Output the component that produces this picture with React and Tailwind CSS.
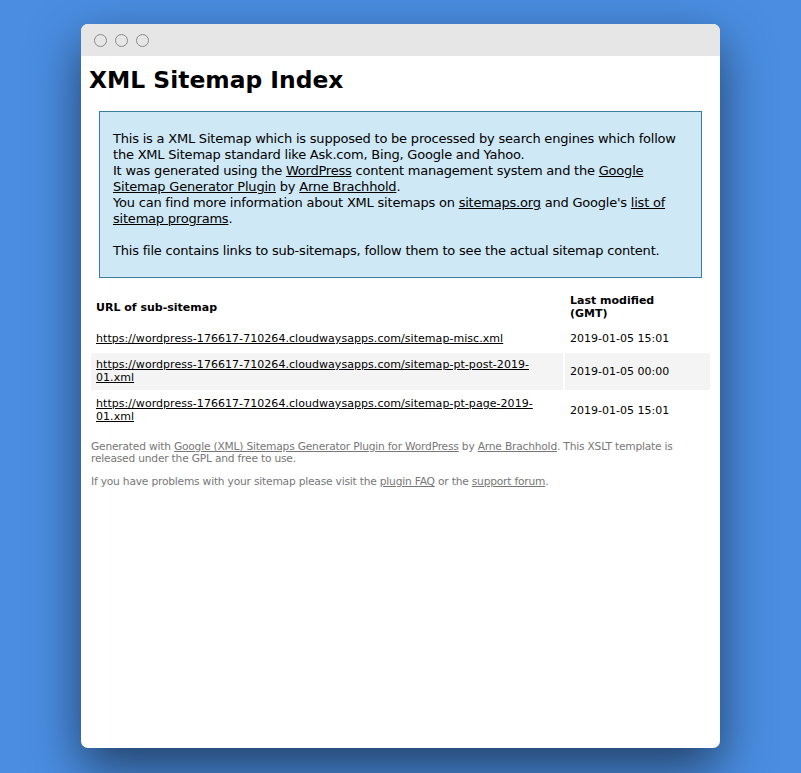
import React from "react";

const F = { fontFamily: '"DejaVu Sans", "Liberation Sans", sans-serif' };

function Row({ url, date, gray }) {
  return (
    <tr className={gray ? "bg-[#f4f4f4]" : ""}>
      <td className="px-[5px] pt-[5px] pb-[6px] leading-[13px] align-middle tracking-[0.05px]">
        <a className="underline text-black">{url}</a>
      </td>
      <td className="px-[5px] pt-[5px] pb-[6px] leading-[13px] align-middle whitespace-nowrap">
        {date}
      </td>
    </tr>
  );
}

export default function App() {
  return (
    <div className="w-[801px] h-[773px] bg-[#4a8de1] pt-[24px] pl-[81px] overflow-hidden" style={F}>
      <div className="w-[639px] h-[724px] rounded-[7px] bg-white overflow-hidden shadow-[0_20px_50px_rgba(0,0,0,0.55)] flex flex-col">
        <div className="h-[32px] bg-[#e6e6e6] flex items-center pl-[13px] gap-[8px] shrink-0">
          <span className="w-[13px] h-[13px] rounded-full border border-[#8a8a8a]" />
          <span className="w-[13px] h-[13px] rounded-full border border-[#8a8a8a]" />
          <span className="w-[13px] h-[13px] rounded-full border border-[#8a8a8a]" />
        </div>
        <div className="px-[8px] text-black">
          <h1 className="mt-[10px] text-[23.4px] leading-[28px] font-bold">XML Sitemap Index</h1>
          <div className="mt-[17px] mx-[10px] border border-[#3b7d9e] bg-[#cfe8f6] pl-[13px] pt-[19px] pb-[18px] text-[13px] leading-[16px] whitespace-nowrap tracking-[-0.21px]">
            <div>This is a XML Sitemap which is supposed to be processed by search engines which follow</div>
            <div>the XML Sitemap standard like Ask.com, Bing, Google and Yahoo.</div>
            <div>
              It was generated using the <a className="underline">WordPress</a> content management system and the{" "}
              <a className="underline">Google</a>
            </div>
            <div>
              <a className="underline">Sitemap Generator Plugin</a> by <a className="underline">Arne Brachhold</a>.
            </div>
            <div>
              You can find more information about XML sitemaps on <a className="underline">sitemaps.org</a> and
              Google's <a className="underline">list of</a>
            </div>
            <div>
              <a className="underline">sitemap programs</a>.
            </div>
            <div className="h-[16px]" />
            <div>This file contains links to sub-sitemaps, follow them to see the actual sitemap content.</div>
          </div>
          <table className="mt-[9px] w-full border-separate border-spacing-[2px] text-[11px]">
            <thead>
              <tr>
                <th className="w-[472px] text-left font-bold px-[5px] py-[5px] leading-[13px] align-middle">URL of sub-sitemap</th>
                <th className="text-left font-bold px-[5px] py-[5px] leading-[13px] align-middle">
                  Last modified
                  <br />
                  (GMT)
                </th>
              </tr>
            </thead>
            <tbody>
              <Row url="https://wordpress-176617-710264.cloudwaysapps.com/sitemap-misc.xml" date="2019-01-05 15:01" />
              <Row
                gray
                url={
                  <>
                    https://wordpress-176617-710264.cloudwaysapps.com/sitemap-pt-post-2019-
                    <br />
                    01.xml
                  </>
                }
                date="2019-01-05 00:00"
              />
              <Row
                url={
                  <>
                    https://wordpress-176617-710264.cloudwaysapps.com/sitemap-pt-page-2019-
                    <br />
                    01.xml
                  </>
                }
                date="2019-01-05 15:01"
              />
            </tbody>
          </table>
          <div className="mt-[8px] p-[2px] text-[10.67px] leading-[12px] text-[#777777] tracking-[-0.2px]">
            <div>
              Generated with <a className="underline">Google (XML) Sitemaps Generator Plugin for WordPress</a> by{" "}
              <a className="underline">Arne Brachhold</a>. This XSLT template is
            </div>
            <div>released under the GPL and free to use.</div>
            <div className="h-[11px]" />
            <div>
              If you have problems with your sitemap please visit the <a className="underline">plugin FAQ</a> or the{" "}
              <a className="underline">support forum</a>.
            </div>
          </div>
        </div>
      </div>
    </div>
  );
}
